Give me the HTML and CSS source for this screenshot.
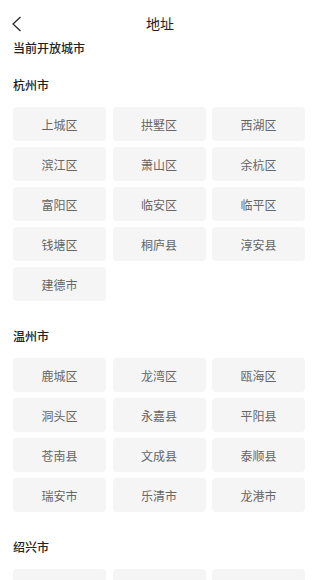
FILE: index.html
```html
<!DOCTYPE html>
<html lang="zh-CN">
  <head>
    <meta charset="UTF-8" />
    <meta name="viewport" content="width=device-width, initial-scale=1.0" />
    <title>地址</title>
    <link rel="stylesheet" href="styles.css">
  </head>
  <body>
    <div id="header">
      <div class="back">
        <svg width="10" height="16" viewBox="0 0 10 16"><polyline points="8.5,1 1,8 8.5,15" fill="none" stroke="#222" stroke-width="1.2" /></svg>
      </div>
      <div class="title">地址</div>
    </div>
    <div class="subtitle">当前开放城市</div>

    <div class="city">
      <div class="cityName">杭州市</div>
      <div class="areas">
        <div class="area">上城区</div>
        <div class="area">拱墅区</div>
        <div class="area">西湖区</div>
        <div class="area">滨江区</div>
        <div class="area">萧山区</div>
        <div class="area">余杭区</div>
        <div class="area">富阳区</div>
        <div class="area">临安区</div>
        <div class="area">临平区</div>
        <div class="area">钱塘区</div>
        <div class="area">桐庐县</div>
        <div class="area">淳安县</div>
        <div class="area">建德市</div>
      </div>
    </div>

    <div class="city">
      <div class="cityName">温州市</div>
      <div class="areas">
        <div class="area">鹿城区</div>
        <div class="area">龙湾区</div>
        <div class="area">瓯海区</div>
        <div class="area">洞头区</div>
        <div class="area">永嘉县</div>
        <div class="area">平阳县</div>
        <div class="area">苍南县</div>
        <div class="area">文成县</div>
        <div class="area">泰顺县</div>
        <div class="area">瑞安市</div>
        <div class="area">乐清市</div>
        <div class="area">龙港市</div>
      </div>
    </div>

    <div class="city">
      <div class="cityName">绍兴市</div>
      <div class="areas">
        <div class="area">越城区</div>
        <div class="area">柯桥区</div>
        <div class="area">上虞区</div>
      </div>
    </div>
  </body>
</html>
```

FILE: styles.css
```css
  * {
    box-sizing: border-box;
  }
  body {
    margin: 0;
    width: 320px;
    font-family: "Noto Sans CJK SC", "Noto Sans", sans-serif;
    color: #222;
    background-color: white;
    overflow: hidden;
  }
  #header {
    position: relative;
    height: 38px;
    padding-top: 8px;
  }
  .back {
    position: absolute;
    left: 12px;
    top: 16px;
    width: 10px;
    height: 16px;
  }
  .back svg {
    display: block;
  }
  .title {
    text-align: center;
    font-size: 14px;
    line-height: 30px;
  }
  .subtitle {
    padding-left: 13px;
    font-size: 12px;
    font-weight: 500;
    line-height: 20px;
    margin-bottom: 17px;
  }
  .city {
    padding: 0 15px 0 13px;
    margin-bottom: 25px;
  }
  .cityName {
    font-size: 12px;
    font-weight: 500;
    line-height: 20px;
    margin-bottom: 12px;
  }
  .areas {
    display: grid;
    grid-template-columns: repeat(3, 1fr);
    column-gap: 6.5px;
    row-gap: 6px;
  }
  .area {
    height: 34px;
    background-color: #f5f5f5;
    border-radius: 4px;
    color: #666;
    font-size: 12px;

    display: flex;
    align-items: center;
    justify-content: center;
  }
```
